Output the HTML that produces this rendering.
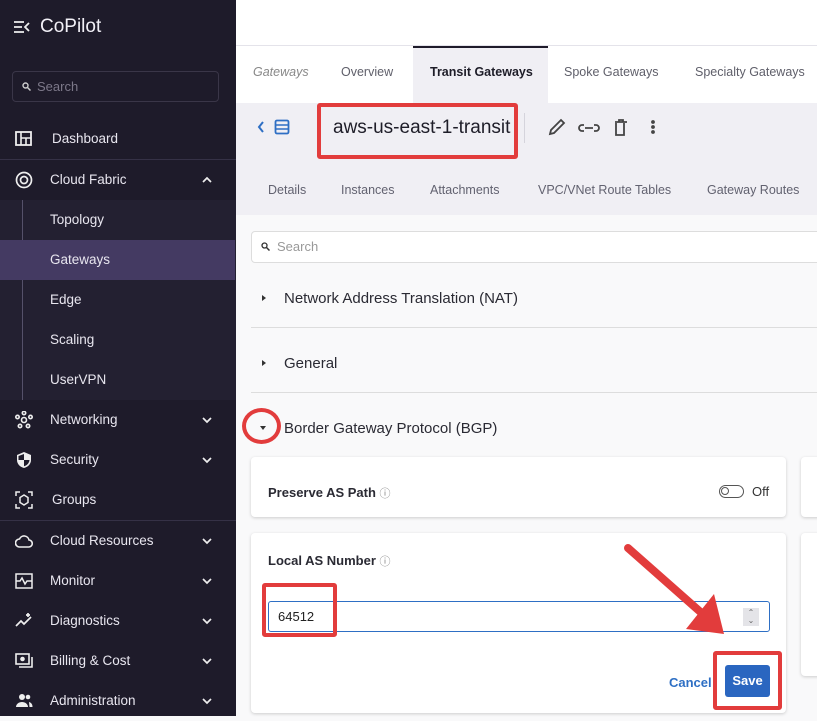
<!DOCTYPE html>
<html><head><style>
*{box-sizing:border-box;margin:0;padding:0}
body{width:817px;height:716px;overflow:hidden;font-family:"Liberation Sans",sans-serif;position:relative;background:#f9f9fa}
.a{position:absolute}
#sb{left:0;top:0;width:236px;height:716px;background:#1e1b2a;color:#e8e6ef}
.it{position:absolute;left:0;width:236px;height:40px;font-size:13.5px;line-height:40px}
.it span{position:absolute;left:50px}
.ic{position:absolute;left:15px;top:11px;width:18px;height:18px}
.chev{position:absolute;left:202px;top:15px;width:10px;height:10px}
.tab{position:absolute;top:46px;height:57px;line-height:52px;font-size:12.5px;color:#5f5f6a}
.st{position:absolute;top:183px;font-size:12.5px;color:#626270}
.card{position:absolute;background:#fff;border-radius:4px;box-shadow:0 1px 3px rgba(0,0,0,.18)}
.red{position:absolute;border:4px solid #e23c3c;border-radius:3px}
</style></head><body>
<div id="sb" class="a">
 <svg class="a" style="left:14px;top:20px" width="16" height="14" viewBox="0 0 16 14"><g stroke="#eee" stroke-width="1.8"><path d="M0 2h10M0 7h8M0 12h10M15 3l-4 4 4 4" fill="none"/></g></svg>
 <div class="a" style="left:40px;top:16px;font-size:19px;color:#f2f0f7">CoPilot</div>
 <div class="a" style="left:12px;top:71px;width:207px;height:31px;border:1px solid #3a3648;border-radius:4px;font-size:13px;color:#7c7889;line-height:30px;padding-left:24px">Search
  <svg class="a" style="left:9px;top:10px" width="9" height="9"><circle cx="3.5" cy="3.5" r="2.5" stroke="#ccc" fill="none" stroke-width="1.4"/><path d="M5.5 5.5l3 3" stroke="#ccc" stroke-width="1.5"/></svg></div>
 <div class="it" style="top:119px"><svg class="ic" viewBox="0 0 18 18"><rect x="1" y="2" width="15" height="13" fill="none" stroke="#eee" stroke-width="1.8"/><path d="M6 2v13M6 8h10M11 8v7" stroke="#eee" stroke-width="1.6"/></svg><span style="left:52px">Dashboard</span></div>
 <div class="a" style="left:0;top:159px;width:236px;height:1px;background:#353146"></div>
 <div class="it" style="top:160px"><svg class="ic" viewBox="0 0 18 18"><circle cx="9" cy="9" r="7.5" fill="none" stroke="#eee" stroke-width="1.7"/><circle cx="9" cy="9" r="3.5" fill="none" stroke="#eee" stroke-width="1.7"/></svg><span>Cloud Fabric</span><svg class="chev" viewBox="0 0 10 10"><path d="M1 7l4-4 4 4" stroke="#eee" stroke-width="1.7" fill="none"/></svg></div>
 <div class="a" style="left:0;top:200px;width:236px;height:200px;background:#232031"></div>
 <div class="a" style="left:22px;top:200px;width:1px;height:200px;background:#55516a"></div>
 <div class="a" style="left:0;top:240px;width:235px;height:40px;background:#443a62"></div>
 <div class="it" style="top:200px"><span>Topology</span></div>
 <div class="it" style="top:240px"><span>Gateways</span></div>
 <div class="it" style="top:280px"><span>Edge</span></div>
 <div class="it" style="top:320px"><span>Scaling</span></div>
 <div class="it" style="top:360px"><span>UserVPN</span></div>
 <div class="it" style="top:400px"><svg class="ic" viewBox="0 0 18 18" fill="none" stroke="#eee" stroke-width="1.6"><circle cx="9" cy="9" r="2.5"/><circle cx="9" cy="2" r="1.7"/><circle cx="2.5" cy="6" r="1.7"/><circle cx="15.5" cy="6" r="1.7"/><circle cx="5" cy="15" r="1.7"/><circle cx="13" cy="15" r="1.7"/></svg><span>Networking</span><svg class="chev" viewBox="0 0 10 10"><path d="M1 3l4 4 4-4" stroke="#eee" stroke-width="1.7" fill="none"/></svg></div>
 <div class="it" style="top:440px"><svg class="ic" viewBox="0 0 18 18"><path d="M9 1l7 3v5c0 4-3 7-7 8-4-1-7-4-7-8V4z" fill="#eee"/><path d="M9 3v6h5.5c-.3 3-2.5 5.5-5.5 6.3V9H3.5V5z" fill="#1e1b2a"/></svg><span>Security</span><svg class="chev" viewBox="0 0 10 10"><path d="M1 3l4 4 4-4" stroke="#eee" stroke-width="1.7" fill="none"/></svg></div>
 <div class="it" style="top:480px"><svg class="ic" viewBox="0 0 18 18" fill="none" stroke="#eee" stroke-width="1.5"><path d="M1 5V1h4M13 1h4v4M17 13v4h-4M5 17H1v-4"/><path d="M9 4l4 2.5v5L9 14l-4-2.5v-5z"/></svg><span style="left:52px">Groups</span></div>
 <div class="a" style="left:0;top:520px;width:236px;height:1px;background:#353146"></div>
 <div class="it" style="top:521px"><svg class="ic" viewBox="0 0 18 18"><path d="M4.5 15h9a3.5 3.5 0 0 0 .5-7 5 5 0 0 0-9.5-1A4 4 0 0 0 4.5 15z" fill="none" stroke="#eee" stroke-width="1.6"/></svg><span>Cloud Resources</span><svg class="chev" viewBox="0 0 10 10"><path d="M1 3l4 4 4-4" stroke="#eee" stroke-width="1.7" fill="none"/></svg></div>
 <div class="it" style="top:561px"><svg class="ic" viewBox="0 0 18 18" fill="none" stroke="#eee" stroke-width="1.5"><rect x="1" y="2" width="16" height="14"/><path d="M1 9h4l2-3 3 6 2-3h5"/></svg><span>Monitor</span><svg class="chev" viewBox="0 0 10 10"><path d="M1 3l4 4 4-4" stroke="#eee" stroke-width="1.7" fill="none"/></svg></div>
 <div class="it" style="top:601px"><svg class="ic" viewBox="0 0 18 18" fill="none" stroke="#eee" stroke-width="1.7"><path d="M1 14l5-5 3 3 7-7M13 1v4M11 3h4"/></svg><span>Diagnostics</span><svg class="chev" viewBox="0 0 10 10"><path d="M1 3l4 4 4-4" stroke="#eee" stroke-width="1.7" fill="none"/></svg></div>
 <div class="it" style="top:641px"><svg class="ic" viewBox="0 0 18 18" fill="none" stroke="#eee" stroke-width="1.6"><rect x="1" y="2" width="13" height="10"/><circle cx="7.5" cy="7" r="1.5" fill="#eee"/><path d="M4 15h13V5"/></svg><span>Billing &amp; Cost</span><svg class="chev" viewBox="0 0 10 10"><path d="M1 3l4 4 4-4" stroke="#eee" stroke-width="1.7" fill="none"/></svg></div>
 <div class="it" style="top:681px"><svg class="ic" viewBox="0 0 18 18" fill="#eee"><circle cx="7" cy="5" r="3"/><path d="M1 15c0-3 3-5 6-5s6 2 6 5z"/><circle cx="13" cy="5" r="2.3"/><path d="M14 10c2 .5 3.5 2 3.5 5h-3z"/></svg><span>Administration</span><svg class="chev" viewBox="0 0 10 10"><path d="M1 3l4 4 4-4" stroke="#eee" stroke-width="1.7" fill="none"/></svg></div>
</div>

<div class="a" style="left:236px;top:0;width:581px;height:46px;background:#fff;border-bottom:1px solid #e4e3ea"></div>
<div class="a" style="left:236px;top:46px;width:581px;height:57px;background:#fff"></div>
<div class="a" style="left:413px;top:46px;width:135px;height:57px;background:#f0eff4;border-top:2px solid #1e1b2a"></div>
<div class="tab" style="left:253px;font-style:italic;color:#888">Gateways</div>
<div class="tab" style="left:341px">Overview</div>
<div class="tab" style="left:430px;color:#1e1d28;font-weight:bold">Transit Gateways</div>
<div class="tab" style="left:564px">Spoke Gateways</div>
<div class="tab" style="left:695px">Specialty Gateways</div>
<div class="a" style="left:236px;top:103px;width:581px;height:112px;background:#f0eff4"></div>
<svg class="a" style="left:256px;top:118px" width="36" height="18"><path d="M7 4l-4 5 4 5" stroke="#2e6fc4" stroke-width="2" fill="none"/><rect x="19.5" y="2.5" width="13" height="13" rx="1.5" stroke="#2e6fc4" stroke-width="1.8" fill="none"/><path d="M20 7h12M20 11h12" stroke="#2e6fc4" stroke-width="1.5"/></svg>
<div class="a" style="left:333px;top:117px;font-size:19px;color:#1e1d28">aws-us-east-1-transit</div>
<div class="a" style="left:524px;top:113px;width:1px;height:30px;background:#d5d4dc"></div>
<svg class="a" style="left:548px;top:118px" width="110" height="20" fill="none" stroke="#444" stroke-width="1.8"><path d="M2 16l1-4L13 2l3 3L6 15z"/><path d="M37 10h8M36 7h-2a3 3 0 0 0 0 6h2M46 7h2a3 3 0 0 1 0 6h-2"/><path d="M67 4h12M71 4V2h4v2M68 5v12h8V5"/><circle cx="105" cy="4" r="1" fill="#444"/><circle cx="105" cy="9" r="1" fill="#444"/><circle cx="105" cy="14" r="1" fill="#444"/></svg>
<div class="red" style="left:317px;top:103px;width:201px;height:56px"></div>
<div class="st" style="left:268px">Details</div>
<div class="st" style="left:341px">Instances</div>
<div class="st" style="left:430px">Attachments</div>
<div class="st" style="left:538px">VPC/VNet Route Tables</div>
<div class="st" style="left:707px">Gateway Routes</div>

<div class="a" style="left:251px;top:231px;width:580px;height:32px;background:#fff;border:1px solid #ddd;border-radius:4px;font-size:13px;color:#999;line-height:30px;padding-left:25px">Search
 <svg class="a" style="left:9px;top:10px" width="9" height="9"><circle cx="3.5" cy="3.5" r="2.5" stroke="#333" fill="none" stroke-width="1.3"/><path d="M5.5 5.5l3 3" stroke="#333" stroke-width="1.5"/></svg></div>
<div class="a" style="left:262px;top:295px;border-left:4px solid #333;border-top:3px solid transparent;border-bottom:3px solid transparent"></div>
<div class="a" style="left:284px;top:290px;font-size:15px;color:#2a2a33">Network Address Translation (NAT)</div>
<div class="a" style="left:251px;top:327px;width:566px;height:1px;background:#ddd"></div>
<div class="a" style="left:262px;top:360px;border-left:4px solid #333;border-top:3px solid transparent;border-bottom:3px solid transparent"></div>
<div class="a" style="left:284px;top:355px;font-size:15px;color:#2a2a33">General</div>
<div class="a" style="left:251px;top:392px;width:566px;height:1px;background:#ddd"></div>
<div class="a" style="left:260px;top:426px;border-top:4px solid #333;border-left:3px solid transparent;border-right:3px solid transparent"></div>
<div class="a" style="left:284px;top:420px;font-size:15px;color:#2a2a33">Border Gateway Protocol (BGP)</div>
<div class="a" style="left:242px;top:408px;width:39px;height:36px;border:4px solid #e23c3c;border-radius:50%"></div>

<div class="card" style="left:251px;top:457px;width:535px;height:60px"></div>
<div class="card" style="left:801px;top:457px;width:30px;height:60px"></div>
<div class="a" style="left:268px;top:485px;font-size:13px;font-weight:bold;color:#2a2a33">Preserve AS Path <span style="font-weight:normal;color:#888;font-size:11px">ⓘ</span></div>
<div class="a" style="left:719px;top:485px;width:25px;height:13px;border:1.5px solid #555;border-radius:7px"><div style="position:absolute;left:1px;top:1px;width:8px;height:8px;border:1.5px solid #555;border-radius:50%"></div></div>
<div class="a" style="left:752px;top:484px;font-size:13px;color:#333">Off</div>

<div class="card" style="left:251px;top:533px;width:535px;height:180px"></div>
<div class="card" style="left:801px;top:533px;width:30px;height:143px"></div>
<div class="a" style="left:268px;top:553px;font-size:13px;font-weight:bold;color:#2a2a33">Local AS Number <span style="font-weight:normal;color:#888;font-size:11px">ⓘ</span></div>
<div class="a" style="left:268px;top:601px;width:502px;height:31px;border:1px solid #2e6fc4;border-radius:3px;background:#fff;font-size:13px;line-height:30px;padding-left:9px;color:#222">64512
 <div class="a" style="left:474px;top:6px;width:16px;height:18px;background:#e4e4e8;font-size:8px;line-height:8px;text-align:center;color:#666;padding-top:1px">⌃<br>⌄</div></div>
<div class="red" style="left:262px;top:583px;width:75px;height:54px"></div>
<div class="a" style="left:669px;top:675px;font-size:13px;font-weight:bold;color:#2e6fc4">Cancel</div>
<div class="a" style="left:725px;top:665px;width:45px;height:32px;background:#2a66c0;border-radius:3px;color:#fff;font-size:13px;font-weight:bold;text-align:center;line-height:32px">Save</div>
<div class="red" style="left:713px;top:651px;width:69px;height:59px"></div>
<svg class="a" style="left:600px;top:530px" width="140" height="110"><path d="M28 18L105 86" stroke="#e23c3c" stroke-width="8" stroke-linecap="round"/><path d="M86 99L124 104 114 64z" fill="#e23c3c"/></svg>
</body></html>
